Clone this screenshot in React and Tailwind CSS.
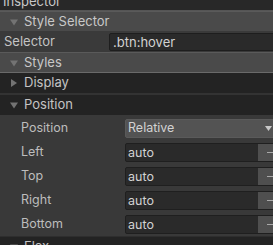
const Tri = ({ open }) => (
  <svg width="10" height="10" viewBox="0 0 10 10" className="shrink-0">
    {open ? <path d="M1 2.5h8L5 8.5z" fill="#737373" /> : <path d="M2 1v8l6-4z" fill="#737373" />}
  </svg>
);

const Header = ({ label, open = true, dark = false }) => (
  <div
    className={`flex items-center h-[20px] pl-[9px] gap-[5px] text-[13px] ${
      dark ? 'bg-[#232323] text-[#c4c4c4]' : 'bg-[#4a4a4a] text-[#c8c8c8] border-t border-[#5a5a5a]'
    }`}
  >
    <Tri open={open} />
    <span>{label}</span>
  </div>
);

const Field = ({ label, value }) => (
  <div className="flex items-center h-[24px]">
    <span className="w-[125px] pl-[21px] text-[12.5px] text-[#bdbdbd]">{label}</span>
    <div className="flex flex-1 h-[19px] rounded-[2px] overflow-hidden border border-[#1f1f1f] bg-[#2a2a2a]">
      <span className="flex-1 pl-[2px] text-[12.5px] leading-[17px] text-[#d2d2d2]">{value}</span>
      <div className="w-[24px] bg-[#4f4f4f] flex items-center justify-center">
        <span className="block w-[7px] h-px bg-[#a8a8a8]" />
      </div>
    </div>
  </div>
);

export default function App() {
  const props = [
    ['Left', 'auto'],
    ['Top', 'auto'],
    ['Right', 'auto'],
    ['Bottom', 'auto'],
  ];

  return (
    <div className="w-[273px] h-[245px] overflow-hidden bg-[#393939]" style={{ fontFamily: 'Inter, sans-serif' }}>
      <div className="w-[283px]">
        {/* inspector title, mostly cut off */}
        <div className="h-[11px] bg-[#282828] overflow-hidden border-b border-[#555]">
          <div className="-mt-[8px] pl-[3px] text-[13px] text-[#c8c8c8]">Inspector</div>
        </div>

        <Header label="Style Selector" />

        <div className="flex items-center h-[21px] bg-[#3a3a3a]">
          <span className="w-[109px] pl-[4px] text-[13px] text-[#c4c4c4]">Selector</span>
          <div className="flex-1 h-[18px] rounded-[2px] border border-[#1e1e1e] bg-[#2a2a2a] pl-[3px] text-[13px] leading-[16px] text-[#d2d2d2]">
            .btn:hover
          </div>
        </div>

        <Header label="Styles" />
        <div className="h-px bg-[#6a6a6a]" />

        <Header label="Display" open={false} dark />
        <div className="h-[2px] bg-[#333]" />
        <Header label="Position" dark />

        <div className="bg-[#393939] pt-[1px]">
          <div className="flex items-center h-[24px]">
            <span className="w-[125px] pl-[21px] text-[12.5px] text-[#bdbdbd]">Position</span>
            <div className="flex flex-1 items-center h-[19px] rounded-[2px] bg-[#535353] border border-[#5a5a5a]">
              <span className="flex-1 pl-[2px] text-[12.5px] text-[#d2d2d2]">Relative</span>
              <svg width="7" height="5" viewBox="0 0 7 5" className="mr-[10px]">
                <path d="M0 0h7L3.5 5z" fill="#c8c8c8" />
              </svg>
            </div>
          </div>
          {props.map(([l, v]) => (
            <Field key={l} label={l} value={v} />
          ))}
        </div>

        <div className="border-t border-[#2e2e2e]">
          <Header label="Flex" dark />
        </div>
      </div>
    </div>
  );
}
